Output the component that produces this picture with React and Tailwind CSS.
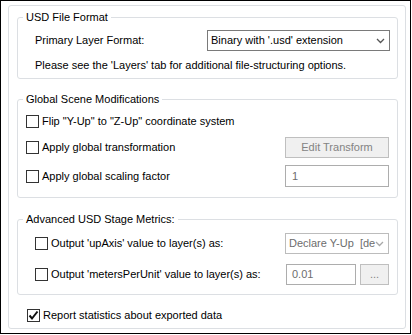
import React from 'react';

const font = { fontFamily: '"Liberation Sans", Arial, sans-serif' };

function Check({ checked }) {
  return (
    <span className="flex h-[13px] w-[13px] shrink-0 items-center justify-center border border-[#333] bg-white">
      {checked && (
        <svg width="11" height="11" viewBox="0 0 11 11">
          <path d="M1.5 5.5 L4 8.5 L9.5 1.5" fill="none" stroke="#111" strokeWidth="2" />
        </svg>
      )}
    </span>
  );
}

function Group({ title, className, children }) {
  return (
    <fieldset className={`w-[381px] rounded-[3px] border border-[#dcdfe3] px-0 ${className}`}>
      <legend className="ml-[5px] px-[3px] text-[11px] leading-[14px] text-black">{title}</legend>
      {children}
    </fieldset>
  );
}

function Chevron({ color }) {
  return (
    <svg width="9" height="6" viewBox="0 0 9 6">
      <path d="M1 1 L4.5 4.5 L8 1" fill="none" stroke={color} strokeWidth="1.3" />
    </svg>
  );
}

export default function App() {
  return (
    <div className="h-[335px] w-[412px] whitespace-nowrap bg-white text-[11px] text-black" style={font}>
      <div className="h-[334px] w-[411px] border border-black bg-white pl-[7px] pt-[4px]">
        <div className="h-[324px] w-[398px] rounded-[3px] border border-[#dcdfe3] px-[8px] pt-[4px]">
          <Group title="USD File Format" className="pb-[6px]">
            <div className="pl-[17px] pr-[7px]">
              <div className="mt-[6px] flex h-[21px] items-center justify-between">
                <span>Primary Layer Format:</span>
                <div className="flex h-[21px] w-[183px] items-center justify-between border border-[#7a7a7a] bg-white pl-[3px] pr-[4px]">
                  <span>Binary with '.usd' extension</span>
                  <Chevron color="#555" />
                </div>
              </div>
              <div className="mt-[7px] leading-[14px]">Please see the 'Layers' tab for additional file-structuring options.</div>
            </div>
          </Group>

          <Group title="Global Scene Modifications" className="mt-[13px] pb-[10px]">
            <div className="pl-[8px] pr-[8px]">
              <div className="mt-[4px] flex h-[22px] items-center gap-[3px]">
                <Check />
                <span>Flip "Y-Up" to "Z-Up" coordinate system</span>
              </div>
              <div className="mt-[4px] flex h-[22px] items-center justify-between">
                <div className="flex items-center gap-[3px]">
                  <Check />
                  <span>Apply global transformation</span>
                </div>
                <div className="flex h-[21px] w-[104px] items-center justify-center border border-[#bfbfbf] bg-[#f0f0f0] text-[#838383]">
                  Edit Transform
                </div>
              </div>
              <div className="mt-[7px] flex h-[22px] items-center justify-between">
                <div className="flex items-center gap-[3px]">
                  <Check />
                  <span>Apply global scaling factor</span>
                </div>
                <div className="flex h-[22px] w-[104px] items-center border border-[#adadad] bg-white pl-[6px] text-[#6d6d6d]">1</div>
              </div>
            </div>
          </Group>

          <Group title="Advanced USD Stage Metrics:" className="mt-[14px] pb-[9px]">
            <div className="pl-[17px] pr-[8px]">
              <div className="mt-[7px] flex h-[21px] items-center justify-between">
                <div className="flex items-center gap-[3px]">
                  <Check />
                  <span>Output 'upAxis' value to layer(s) as:</span>
                </div>
                <div className="flex h-[21px] w-[104px] items-center justify-between overflow-hidden border border-[#bcbcbc] bg-white pl-[3px] pr-[4px] text-[#6d6d6d]">
                  <span className="overflow-hidden">Declare Y-Up&nbsp; [de</span>
                  <Chevron color="#a8a8a8" />
                </div>
              </div>
              <div className="mt-[10px] flex h-[21px] items-center justify-between">
                <div className="flex items-center gap-[3px]">
                  <Check />
                  <span>Output 'metersPerUnit' value to layer(s) as:</span>
                </div>
                <div className="flex items-center gap-[4px]">
                  <div className="flex h-[21px] w-[70px] items-center border border-[#adadad] bg-white pl-[5px] text-[#6d6d6d]">0.01</div>
                  <div className="flex h-[21px] w-[29px] items-center justify-center border border-[#bfbfbf] bg-[#f0f0f0] text-[#838383]">...</div>
                </div>
              </div>
            </div>
          </Group>

          <div className="ml-[10px] mt-[13px] flex h-[14px] items-center gap-[3px]">
            <Check checked />
            <span>Report statistics about exported data</span>
          </div>
        </div>
      </div>
    </div>
  );
}
